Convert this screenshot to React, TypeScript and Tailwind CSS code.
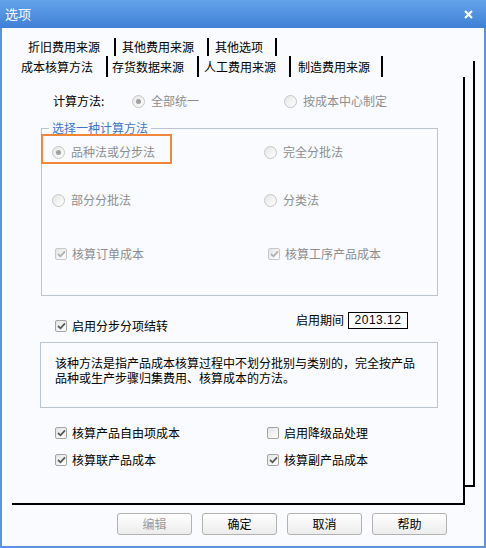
import React from "react";

type ItemProps = { label: string; checked?: boolean; disabled?: boolean };

function Radio({ label, checked, disabled }: ItemProps) {
  return (
    <div className="flex h-[14px] items-center gap-[6px]">
      <span className="flex h-[13px] w-[13px] items-center justify-center rounded-full border border-[#c6c6c6] bg-linear-to-br from-[#e6e6e6] to-white">
        {checked && <span className="h-[5px] w-[5px] rounded-full bg-[#a0a0a0]" />}
      </span>
      <span className={disabled ? "text-[#8e8e8e]" : "text-black"}>{label}</span>
    </div>
  );
}

function Check({ label, checked, disabled }: ItemProps) {
  return (
    <div className="flex h-[14px] items-center gap-[5px]">
      <span
        className={
          "flex h-[12px] w-[12px] items-center justify-center rounded-[2px] border bg-linear-to-br from-[#e4e4e4] to-white " +
          (disabled ? "border-[#c8c8c8]" : "border-[#a4a4a4]")
        }
      >
        {checked && (
          <svg width="9" height="8" viewBox="0 0 9 8">
            <path d="M1 4 L3.5 6.3 L8 1.3" fill="none" stroke={disabled ? "#b0b0b0" : "#5a5a5a"} strokeWidth="1.8" />
          </svg>
        )}
      </span>
      <span className={disabled ? "text-[#8e8e8e]" : "text-black"}>{label}</span>
    </div>
  );
}

function Button({ label, disabled }: { label: string; disabled?: boolean }) {
  return (
    <button
      type="button"
      className={
        "h-[22px] w-[75px] rounded-[3px] border border-[#b2b2b2] bg-linear-to-b from-white to-[#ececec] text-[12px] leading-[14px] " +
        (disabled ? "text-[#9a9a9a]" : "text-black")
      }
    >
      {label}
    </button>
  );
}

export default function App() {
  return (
    <div className="h-[548px] w-[486px] overflow-hidden bg-[#f9fbfe] font-['Noto_Sans_CJK_SC','Liberation_Sans',sans-serif] text-[12px] leading-[14px] text-black">
      {/* title bar */}
      <div className="flex h-[28px] items-center justify-between bg-linear-to-b from-[#64a3ea] to-[#3f80d6] pl-[5px] pr-[13px]">
        <span className="text-[13px] text-white">选项</span>
        <svg width="9" height="9" viewBox="0 0 9 9">
          <path d="M1 1 L8 8 M8 1 L1 8" stroke="white" strokeWidth="2.2" />
        </svg>
      </div>

      <div className="flex h-[520px] flex-col border-x-2 border-b-2 border-[#5a94dc]">
        {/* tab row 1 */}
        <div className="mt-[10px] flex h-[18px] pl-[26px]">
          <div className="flex w-[88px] items-center border-r-2 border-black">折旧费用来源</div>
          <div className="flex w-[93px] items-center border-r-2 border-black pl-[6px]">其他费用来源</div>
          <div className="flex w-[68px] items-center border-r-2 border-black pl-[6px]">其他选项</div>
        </div>

        {/* front page + edge of the page behind it */}
        <div className="ml-[8px] flex">
          <div className="flex flex-col">
            <div className="flex h-[21px]">
              <div className="flex w-[98px] items-center border-r-2 border-black pl-[11px]">成本核算方法</div>
              <div className="flex w-[91px] items-center border-r-2 border-black pl-[4px]">存货数据来源</div>
              <div className="flex w-[92px] items-center border-r-2 border-black pl-[5px]">人工费用来源</div>
              <div className="flex w-[92px] items-center border-r-2 border-black pl-[7px]">制造费用来源</div>
            </div>

            <div className="ml-[2px] flex h-[428px] w-[453px] flex-col border-r-2 border-b-2 border-black">
              {/* calc method row */}
              <div className="mt-[14px] flex h-[20px] items-center">
                <span className="ml-[41px] w-[79px]">计算方法:</span>
                <div className="w-[152px]">
                  <Radio label="全部统一" checked disabled />
                </div>
                <Radio label="按成本中心制定" disabled />
              </div>

              {/* group box */}
              <fieldset className="ml-[29px] mt-[10px] w-[397px] border border-[#b9c5d2] pb-[34px]">
                <legend className="ml-[7px] px-[3px] leading-[14px] text-[#3f76cc]">选择一种计算方法</legend>
                <div className="-mt-[1px] flex h-[30px]">
                  <div className="-ml-[1px] flex h-[30px] w-[131px] border-2 border-[#f0873a] pl-[9px] pt-[9px]">
                    <Radio label="品种法或分步法" checked disabled />
                  </div>
                  <div className="ml-[92px] pt-[11px]">
                    <Radio label="完全分批法" disabled />
                  </div>
                </div>
                <div className="mt-[29px] flex">
                  <div className="ml-[10px] w-[212px]">
                    <Radio label="部分分批法" disabled />
                  </div>
                  <Radio label="分类法" disabled />
                </div>
                <div className="mt-[40px] flex">
                  <div className="ml-[13px] w-[213px]">
                    <Check label="核算订单成本" checked disabled />
                  </div>
                  <Check label="核算工序产品成本" checked disabled />
                </div>
              </fieldset>

              {/* step transfer + period */}
              <div className="mt-[15px] flex h-[18px] items-center">
                <div className="ml-[43px] mt-[12px] w-[241px]">
                  <Check label="启用分步分项结转" checked />
                </div>
                <span>启用期间</span>
                <div className="ml-[4px] flex h-[17px] w-[60px] items-center justify-center border border-black bg-white font-['Liberation_Sans',sans-serif] text-[12px] tracking-[0.5px]">
                  2013.12
                </div>
              </div>

              {/* description */}
              <div className="ml-[28px] mt-[13px] h-[66px] w-[398px] border border-[#b9c5d2] pl-[14px] pt-[12px] leading-[15px]">
                <div>该种方法是指产品成本核算过程中不划分批别与类别的，完全按产品</div>
                <div>品种或生产步骤归集费用、核算成本的方法。</div>
              </div>

              {/* bottom options */}
              <div className="mt-[18px] flex">
                <div className="ml-[43px] w-[212px]">
                  <Check label="核算产品自由项成本" checked />
                </div>
                <Check label="启用降级品处理" />
              </div>
              <div className="mt-[13px] flex">
                <div className="ml-[43px] w-[212px]">
                  <Check label="核算联产品成本" checked />
                </div>
                <Check label="核算副产品成本" checked />
              </div>
            </div>
          </div>

          {/* right and bottom edge of the back page */}
          <div className="mt-[5px] h-[426px] w-[10px] border-r-2 border-b-2 border-black" />
        </div>

        {/* buttons */}
        <div className="mt-[8px] flex gap-[10px] pl-[115px]">
          <Button label="编辑" disabled />
          <Button label="确定" />
          <Button label="取消" />
          <Button label="帮助" />
        </div>
      </div>
    </div>
  );
}
